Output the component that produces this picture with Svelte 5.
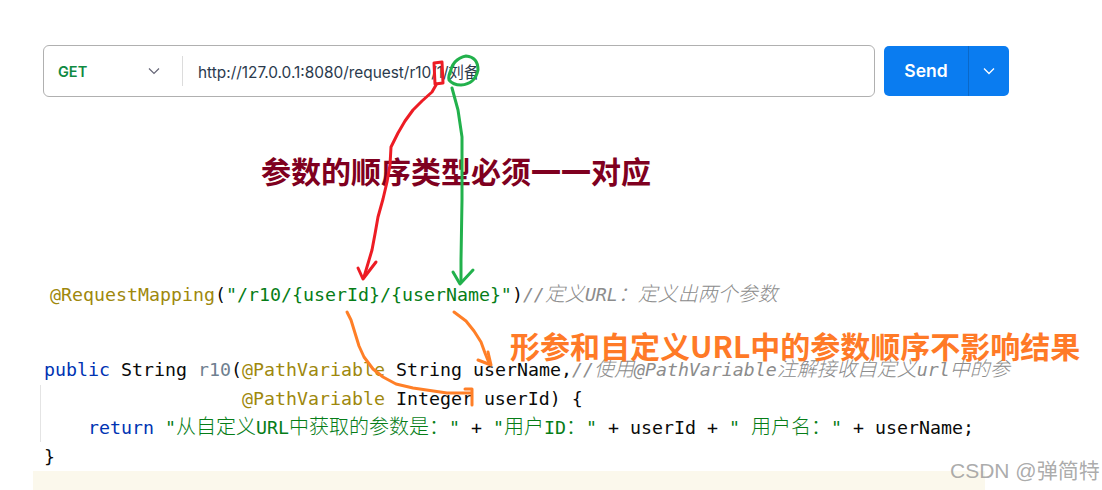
<script>
  const red = "M436 85 L432 92 L422 101 L413 110 L405 121 L398 133 L391 147 L390 165 L387 182 L383 199 L378 217 L375 234 L372 250 L364 277";
  const green = "M452 88 L458 110 L462 137 L462 200 L461 260 L461 282";
  const orange1 = "M347 312 L351 320 L355 333 L359 346 L364 357 L373 369 L383 377 L396 384 L413 388 L447 393 L471 393";
  const orange2 = "M454 312 L466 321 L474 331 L481 342 L485 353 L489 363";
</script>

<div class="page">
  <div class="bar">
    <div class="urlbox">
      <div class="method">
        <span>GET</span>
        <svg width="12" height="8" viewBox="0 0 12 8"><path d="M1 1.5 L6 6.5 L11 1.5" fill="none" stroke="#667" stroke-width="1.2"/></svg>
      </div>
      <div class="url">http://127.0.0.1:8080/request/r10/1/刘备</div>
    </div>
    <div class="send">
      <span class="send-label">Send</span>
      <span class="send-more">
        <svg width="12" height="8" viewBox="0 0 12 8"><path d="M1 1.5 L6 6.5 L11 1.5" fill="none" stroke="#fff" stroke-width="1.3"/></svg>
      </span>
    </div>
  </div>

  <div class="code">
    <div class="line first"><span class="ann">@RequestMapping</span>(<span class="str">"/r10/&#123;userId&#125;/&#123;userName&#125;"</span>)<span class="com">//<span class="cjk">定义</span>URL<span class="cjk">：定义出两个参数</span></span></div>
    <div class="line spaced"><span class="kw">public</span> String <span class="fn">r10</span>(<span class="ann">@PathVariable</span> String userName,<span class="com">//<span class="cjk">使用</span>@PathVariable<span class="cjk">注解接收自定义</span>url<span class="cjk">中的参</span></span></div>
    <div class="line indent-params"><span class="ann">@PathVariable</span> Integer userId) &#123;</div>
    <div class="line indent-body"><span class="kw">return</span> <span class="str">"<span class="cjk">从自定义</span>URL<span class="cjk">中获取的参数是：</span>"</span> + <span class="str">"<span class="cjk">用户</span>ID<span class="cjk">：</span>"</span> + userId + <span class="str">" <span class="cjk">用户名：</span>"</span> + userName;</div>
    <div class="line">&#125;</div>
  </div>

  <div class="band"></div>

  <div class="gutter"></div>
  <div class="note note-red">参数的顺序类型必须一一对应</div>
  <div class="note note-orange">形参和自定义URL中的参数顺序不影响结果</div>

  <svg class="ink" width="1102" height="490" viewBox="0 0 1102 490" fill="none" stroke-linecap="round" stroke-linejoin="round">
    <g stroke="#ed1c24" stroke-width="3">
      <path d="M434 63 L442 62 L443 83 L435 84 L434 63" />
      <path d={red} />
      <path d="M358 268 L363 279 L376 262" />
    </g>
    <g stroke="#22b14c" stroke-width="3">
      <path d="M450 74 Q452 59 466 56 Q478 57 478 70 Q475 84 461 85 Q453 85 449 80 Q448 76 451 70" />
      <path d={green} />
      <path d="M453 272 L460 284 L473 270" />
    </g>
    <g stroke="#ff7f27" stroke-width="3">
      <path d={orange1} />
      <path d="M465 389 L472 389 L472 405" />
      <path d={orange2} />
      <path d="M478 360 L491 365 L488 352" />
    </g>
  </svg>

  <div class="mark">CSDN @弹简特</div>
</div>

<style>
  :global(body) {
    margin: 0;
    background: #fff;
  }
  .page {
    position: relative;
    width: 1102px;
    height: 490px;
    overflow: hidden;
    padding-top: 45px;
    box-sizing: border-box;
  }
  .bar {
    display: flex;
    align-items: center;
    gap: 9px;
    margin-left: 43px;
    width: 966px;
    font-family: Inter, "Noto Sans CJK SC", sans-serif;
  }
  .urlbox {
    flex: 1;
    height: 52px;
    box-sizing: border-box;
    border: 1px solid #b0b0b0;
    border-radius: 6px;
    display: flex;
    align-items: center;
  }
  .method {
    width: 139px;
    height: 30px;
    box-sizing: border-box;
    padding: 0 22px 0 14px;
    display: flex;
    align-items: center;
    justify-content: space-between;
    border-right: 1px solid #dcdcdc;
    color: #0f8a42;
    font-weight: 600;
    font-size: 14.5px;
  }
  .url {
    padding-left: 15px;
    font-size: 15.4px;
    color: #2b3a4d;
  }
  .send {
    width: 125px;
    height: 50px;
    display: flex;
    align-items: center;
    background: #0a7cf0;
    border-radius: 5px;
    color: #fff;
    font-weight: 600;
    font-size: 17.5px;
  }
  .send-label {
    width: 84px;
    text-align: center;
    line-height: 50px;
    border-right: 1px solid #0a68c8;
  }
  .send-more {
    flex: 1;
    display: flex;
    justify-content: center;
  }
  .code {
    margin-top: 183px;
    padding-left: 44px;
    font-family: "DejaVu Sans Mono", "Noto Sans CJK SC", monospace;
    font-size: 18.27px;
    line-height: 29px;
    color: #0a0a0a;
  }
  .line {
    height: 29px;
    white-space: pre;
  }
  .first {
    padding-left: 6px;
  }
  .spaced {
    margin-top: 46px;
  }
  .indent-params {
    padding-left: 18ch;
  }
  .indent-body {
    padding-left: 4ch;
  }
  .cjk {
    font-family: "Noto Sans CJK SC", sans-serif;
    font-size: 20px;
    font-weight: 300;
    line-height: 0;
  }
  .ann { color: #9e880d; }
  .str { color: #067d17; }
  .kw { color: #0033b3; }
  .fn { color: #6f8090; }
  .com {
    color: #8c8c8c;
    font-style: italic;
  }
  .band {
    position: absolute;
    left: 33px;
    top: 471px;
    width: 952px;
    height: 19px;
    background: #fbf8ec;
  }
  .gutter {
    position: absolute;
    left: 40px;
    top: 385px;
    width: 1px;
    height: 57px;
    background: #e4e4e4;
  }
  .note {
    position: absolute;
    font-family: "Noto Sans CJK SC", sans-serif;
    font-weight: 700;
    font-size: 30px;
    line-height: 40px;
    white-space: nowrap;
  }
  .note-red {
    left: 261px;
    top: 150px;
    color: #7f0020;
  }
  .note-orange {
    left: 510px;
    top: 325px;
    color: #ff7a27;
  }
  .ink {
    position: absolute;
    left: 0;
    top: 0;
  }
  .mark {
    position: absolute;
    left: 950px;
    top: 458px;
    font-family: "Liberation Sans", "Noto Sans CJK SC", sans-serif;
    font-size: 21px;
    line-height: 26px;
    color: rgba(150, 150, 150, 0.8);
    white-space: nowrap;
  }
</style>
